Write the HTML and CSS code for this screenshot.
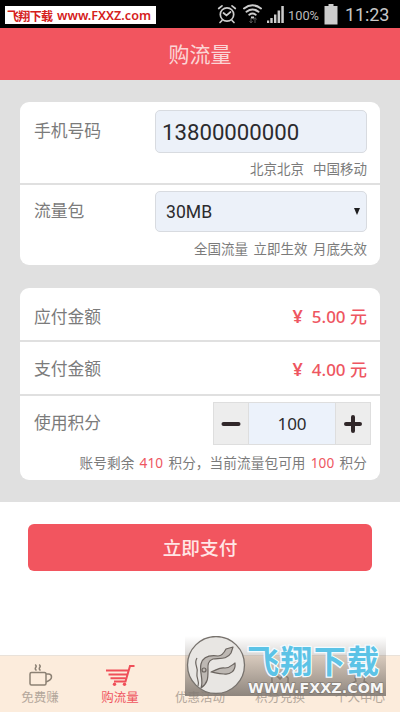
FILE: index.html
```html
<!DOCTYPE html>
<html lang="zh-CN">
<head>
<meta charset="utf-8">
<title>购流量</title>
<link rel="stylesheet" href="styles.css">
</head>
<body>
<div class="app">
  <div class="status">
    <svg class="status-icons" width="125" height="28" viewBox="0 0 125 28">
      <g fill="none" stroke="#ccc" stroke-width="1.7" stroke-linecap="round">
        <circle cx="12" cy="14.5" r="6.7"/>
        <path d="M8.500 13l3 2.500 4-3.500M3.700 8.500L7 5.800M20.300 8.500L17 5.800M7 20.500l-2 2M17 20.500l2 2"/>
        <path d="M29 8.500q8.500-6.500 17 0M31.500 11.700q6-4.500 12 0M34.300 14.700q3.200-2.400 6.400 0" stroke-width="2"/>
      </g>
      <path d="M36 16.500h3v2h-3z" fill="#ccc"/>
      <path d="M36 18v5M34.500 21l1.500 2 1.500-2M40 23v-5M38.500 19.500l1.500-2 1.500 2" stroke="#555" fill="none"/>
      <path d="M52 20.500h2.200V23H52zM55.300 18h2.400v5h-2.400zM59 14.500h2.400V23H59zM62.600 10.500h2.500V23h-2.500zM66.300 6h2.500v17h-2.500z" fill="#ccc"/>
      <text x="73" y="19.500" font-size="12.500" fill="#bbb" textLength="31" lengthAdjust="spacingAndGlyphs">100%</text>
      <path d="M109.500 6h4V4h5v2h4v18.500h-13z" fill="#ccc"/>
    </svg>
    <span class="clock">11:23</span>
    <div class="site-tag"><svg width="151" height="18"><text x="2" y="14.500" font-size="12" textLength="46">飞翔下载</text><text x="52" y="14" font-size="12.500" textLength="94" lengthAdjust="spacingAndGlyphs">www.FXXZ.com</text></svg></div>
  </div>
  <header class="title">购流量</header>
  <main class="content">
    <section class="card">
      <div class="row phone">
        <div class="line"><span class="label">手机号码</span><div class="field number">13800000000</div></div>
        <p class="hint"><span>北京北京</span><span class="carrier">中国移动</span></p>
      </div>
      <div class="row pack">
        <div class="line"><span class="label">流量包</span><div class="field select"><span>30MB</span><i class="arrow"></i></div></div>
        <p class="hint wide">全国流量 立即生效 月底失效</p>
      </div>
    </section>
    <section class="card">
      <div class="row amount"><span class="label">应付金额</span><span class="price"><b class="yen">¥</b>5.00 元</span></div>
      <div class="row amount second"><span class="label">支付金额</span><span class="price"><b class="yen">¥</b>4.00 元</span></div>
      <div class="row points">
        <div class="line"><span class="label">使用积分</span>
          <div class="stepper">
            <div class="step"><svg width="20" height="20"><path d="M2.500 10h15"/></svg></div>
            <div class="count">100</div>
            <div class="step"><svg width="20" height="20"><path d="M3 10h14M10 3v14"/></svg></div>
          </div>
        </div>
        <p class="hint balance">账号剩余 <em>410</em> 积分，当前流量包可用 <em>100</em> 积分</p>
      </div>
    </section>
  </main>
  <div class="action"><div class="pay">立即支付</div></div>
  <nav class="tabs">
    <div class="tab"><svg width="26" height="26" viewBox="0 0 26 26"><g fill="none" stroke="#8c8174" stroke-width="1.500"><rect x="3" y="9.500" width="16" height="12.500" rx="1.500"/><path d="M19 11h2.500q3 0 3 3t-5.500 5M9.500 7.500q-2-1.500-.8-3T8.200 1.500M13.500 7.500q-2-1.500-.8-3T12.200 1.500"/></g></svg><span>免费赚</span></div>
    <div class="tab active"><svg width="30" height="26" viewBox="0 0 30 26"><path d="M29.500 3h-4.500l-4.500 15.500H9M1 7.500h22M3.500 11.500h18.500M5.500 15.200h15" fill="none" stroke="#ef4f59" stroke-width="2"/><circle cx="9.500" cy="21.300" r="1.700" fill="#ef4f59"/><circle cx="19.500" cy="21.300" r="1.700" fill="#ef4f59"/></svg><span>购流量</span></div>
    <div class="tab"><svg width="26" height="26"></svg><span>优惠活动</span></div>
    <div class="tab"><svg width="26" height="26" viewBox="0 0 26 26"><path d="M5 22v-5q-1-3 3-4 3 0 5 3 2-3 5-3 4 1 3 4v5" fill="none" stroke="#8c8174" stroke-width="1.500"/></svg><span>积分兑换</span></div>
    <div class="tab"><svg width="26" height="26" viewBox="0 0 26 26"><path d="M5 22q1-3 4-4-3-7 4-7t4 7q3 1 4 4" fill="none" stroke="#8c8174" stroke-width="1.500"/></svg><span>个人中心</span></div>
  </nav>
  <div class="watermark">
    <svg width="201" height="60" viewBox="0 0 201 60">
      <circle cx="31" cy="29" r="28.500" fill="#e8e6e3" stroke="#77726d" stroke-width="1.300"/>
      <g fill="#bdb8b3" stroke="#6b6560" stroke-width="1.200" stroke-linejoin="round">
        <path d="M16 52c3-8-2-16 0-24 2-8 9-9 17-8 4 0 6-3 8-7l7-2-2 6c-4 7-12 5-18 6-6 2-5 7-5 12 0 7 0 12-7 17z"/>
        <path d="M26 36c6-2 8-5 14-4 5 0 7-3 10-5 1 8-5 12-11 11-5 0-8-1-13-2z"/>
        <path d="M12 22c-4 6 2 10 0 15-1 6 3 8 1 13" fill="none"/>
        <circle cx="19" cy="34" r="2"/>
      </g>
      <text class="mark-name" x="62" y="37" font-size="32" textLength="132">飞翔下载</text>
      <text class="mark-url" x="63" y="56.500" font-size="14" textLength="136" lengthAdjust="spacingAndGlyphs">WWW.FXXZ.COM</text>
    </svg>
  </div>
</div>
</body>
</html>
```
FILE: styles.css
```css
* { box-sizing: border-box; }
body { margin: 0; font-family: "Noto Sans", "Noto Sans CJK SC", sans-serif; color: #7b7b7b; }
svg { display: block; flex: none; }
p { margin: 0; }
.app { position: relative; width: 400px; height: 712px; overflow: hidden; background: #fff; display: flex; flex-direction: column; }
.status { height: 28px; flex: none; background: #000; display: flex; justify-content: flex-end; padding-right: 12px; font-family: Roboto, sans-serif; }
.clock { width: 43px; margin-left: 5px; font-size: 18px; line-height: 29px; color: #c8c8c8; white-space: nowrap; letter-spacing: -0.1px; }
.site-tag { position: absolute; left: 5px; top: 6px; width: 151px; height: 18px; background: #fff; }
.site-tag text { fill: #d5201b; font-family: "Noto Sans", "Noto Sans CJK SC", sans-serif; font-weight: 600; }
.title { height: 52px; flex: none; background: #f2555f; color: #fbd5d6; font-size: 21px; line-height: 53px; text-align: center; }
.content { height: 422px; flex: none; background: #e0e0e0; padding: 22px 20px; display: flex; flex-direction: column; gap: 23px; }
.card { background: #fff; border-radius: 9px; }
.row + .row { border-top: 2px solid #e0e0e0; }
.row { padding: 0 13px 0 14px; }
.line { display: flex; justify-content: space-between; }
.label { font-size: 16.8px; line-height: 24px; }
.phone { height: 81px; padding-top: 8px; }
.phone .label { margin-top: 9px; }
.field { width: 212px; border: 1.5px solid #d8dbe0; border-radius: 5px; background: #ecf1f9; color: #2b2b2e; font-family: Roboto, sans-serif; }
.number { height: 43px; padding-left: 6px; font-size: 22.2px; line-height: 42px; }
.pack { height: 82px; padding-top: 6px; }
.pack .label { margin-top: 8px; }
.select { height: 41px; padding: 0 6px 0 10px; display: flex; align-items: center; justify-content: space-between; font-size: 17.6px; }
.arrow { border: 3.5px solid transparent; border-top: 7px solid #1d1d1f; border-bottom: 0; }
.hint { display: flex; justify-content: flex-end; font-size: 13.5px; line-height: 20px; white-space: pre; }
.phone .hint { margin-top: 6px; }
.pack .hint { margin-top: 7px; }
.wide { word-spacing: 2px; }
.carrier { margin-left: 9px; }
.amount { height: 52px; display: flex; justify-content: space-between; align-items: center; padding-top: 5px; }
.amount.second { height: 54px; padding-top: 2px; }
.price { font-size: 17px; line-height: 24px; font-weight: 500; color: #ee5661; }
.yen { font-size: 18px; font-weight: 600; margin-right: 9px; }
.points { height: 86px; padding-top: 6px; }
.points .line { margin-right: -4px; }
.points .label { margin-top: 9px; }
.stepper { width: 158px; height: 43px; display: flex; border: 1px solid #dedede; }
.step { width: 34px; display: flex; align-items: center; justify-content: center; background: #ededed; }
.step path { stroke: #302729; stroke-width: 4; stroke-linecap: round; }
.count { flex: 1; background: #ecf2fb; border: solid #dedede; border-width: 0 1px; color: #2b2b2e; text-align: center; font-size: 17px; line-height: 42px; }
.balance { margin-top: 8px; font-size: 13.6px; word-spacing: 1.5px; letter-spacing: .12px; }
.balance em { font-style: normal; color: #ee5661; }
.action { height: 153px; flex: none; padding: 22px 28px; }
.pay { height: 47px; border-radius: 6px; background: #f2555f; color: #ffe6e6; font-size: 18.7px; font-weight: 500; text-align: center; line-height: 47px; }
.tabs { height: 57px; flex: none; background: #fcecdc; border-top: 1px solid #e9e2da; display: flex; }
.tab { width: 80px; padding-top: 7px; display: flex; flex-direction: column; align-items: center; font-size: 12.5px; line-height: 18px; color: #b3a79b; }
.active { color: #ef5660; }
.watermark { position: absolute; left: 185px; top: 636px; width: 201px; height: 60px; background: linear-gradient(rgba(130, 122, 115, 0), rgba(130, 122, 115, .9)); }
.mark-name { font-family: "Noto Sans CJK SC", sans-serif; font-weight: 700; fill: #5cc3e6; stroke: #f3fbff; stroke-width: 2.5px; paint-order: stroke; }
.mark-url { font-family: "DejaVu Sans", sans-serif; font-weight: 700; fill: #f6f6f6; stroke: #77716b; stroke-width: 1px; paint-order: stroke; }
```
